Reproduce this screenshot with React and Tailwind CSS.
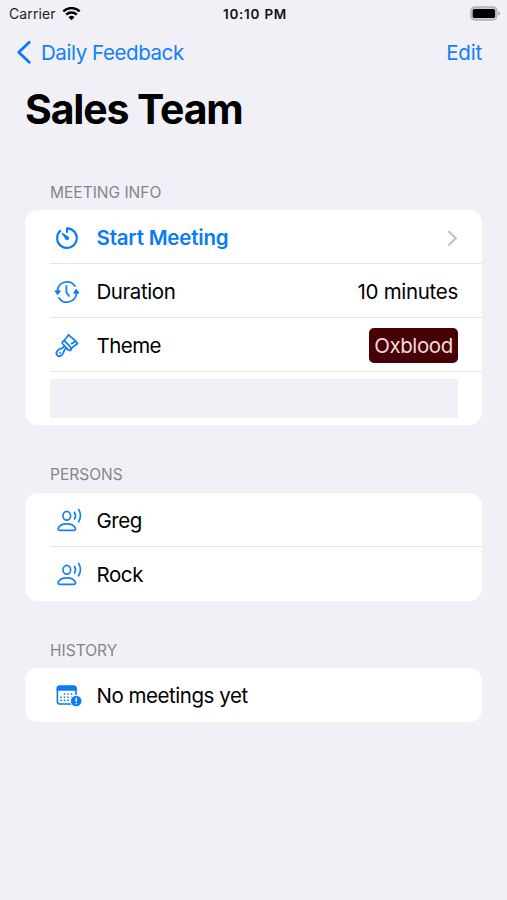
import React from "react";

function WifiIcon() {
  return (
    <svg width="19" height="14" viewBox="0 0 19 14" fill="none" stroke="#000" strokeWidth="2.4">
      <path d="M1.3 4.4a11.7 11.7 0 0 1 16.4 0" />
      <path d="M4.2 7.7a7.6 7.6 0 0 1 10.6 0" />
      <path d="M9.5 13.2 6.5 10.2a4.3 4.3 0 0 1 6 0z" fill="#000" stroke="none" />
    </svg>
  );
}

function BatteryIcon() {
  return (
    <svg width="31" height="16" viewBox="0 0 31 16">
      <rect x="0.9" y="1" width="26" height="13" rx="4" fill="#d0d0d2" stroke="#b0b0b3" strokeWidth="1.3" />
      <rect x="2.7" y="2.9" width="22.4" height="9.2" rx="1.6" fill="#000" />
      <path d="M28.2 5.2q2 .9 2 2.3t-2 2.3z" fill="#b0b0b3" />
    </svg>
  );
}

function TimerIcon() {
  return (
    <svg width="28" height="28" viewBox="0 0 28 28" fill="none" stroke="#087bf5" strokeWidth="2.2" strokeLinecap="round" strokeLinejoin="round">
      <path d="M14 8V4.3a9.8 9.8 0 1 1-6.7 2.6" />
      <path d="M9.2 9.2 15.4 13.4a1.5 1.5 0 0 1-2 2z" fill="#087bf5" strokeWidth="1.2" />
    </svg>
  );
}

function ClockArrowsIcon() {
  return (
    <svg width="28" height="28" viewBox="0 0 28 28" fill="none" stroke="#1580f5" strokeWidth="1.8" strokeLinecap="round" strokeLinejoin="round">
      <path d="M4.4 13a9.7 9.9 0 0 1 17.6-4.9" />
      <path d="M23.6 15a9.7 9.9 0 0 1-17.6 4.9" />
      <path d="M2.3 13h4.8l-2.4 3.5z" fill="#1580f5" strokeWidth="1.3" />
      <path d="M20.9 15h4.8l-2.4-3.5z" fill="#1580f5" strokeWidth="1.3" />
      <path d="M13.4 8v6.4l2.6 3.6" />
    </svg>
  );
}

function BrushIcon() {
  return (
    <svg width="28" height="28" viewBox="0 0 28 28" fill="none" stroke="#1580f5" strokeWidth="1.8" strokeLinecap="round" strokeLinejoin="round">
      <path d="M10.8 9 15.6 2.7c1.1 1.6 2.2 2.4 3.6 3.3 2 1.4 3.8 3.3 5.4 5.5l-6.9 5.3" />
      <path d="m18.6 11.6 2.9-1.7" />
      <path d="M10.5 9c-1.5.8-1.6 1.900-.7 3l5.8 6.1c1 .7 2.1.5 2.7-.7.2-.9 0-1.5-.6-2.100l-5.300-5.600c-.6-.6-1.200-.9-1.900-.7Z" />
      <path d="M11.2 13.800c.1 1.300-.3 1.800-1.400 2.100-2.300.6-4.600 1.600-5.600 3.100-1.100 1.600-.9 3.400.2 4.500 1.400 1.100 3.200.7 4.500-.6 1.200-1.400 2-3 2.500-4.900.3-1 .9-1.300 2.400-1.100" />
      <path d="M7 20.900h.1" strokeWidth="1.8" />
    </svg>
  );
}

function SpeakerIcon() {
  return (
    <svg width="29" height="28" viewBox="0 0 29 28" fill="none" stroke="#1580f5" strokeWidth="1.7" strokeLinecap="round" strokeLinejoin="round">
      <ellipse cx="13.8" cy="8.8" rx="3.8" ry="4.4" />
      <path d="M7 23.4c-1.600 0-2.200-.9-1.800-2 1-2.900 4.400-4.600 8.600-4.600s7.600 1.700 8.600 4.600c.4 1.100-.2 2-1.800 2z" />
      <path d="M21.500 5.500a6.100 6.100 0 0 1 0 6.500" />
      <path d="M25.600 2.400a12 12 0 0 1 0 12.400" />
    </svg>
  );
}

function CalendarIcon() {
  return (
    <svg width="30" height="28" viewBox="0 0 30 28" fill="#087bf5">
      <rect x="4.4" y="4.4" width="18.6" height="17.6" rx="2.6" fill="#fff" stroke="#087bf5" strokeWidth="1.6" />
      <path d="M3.6 8.8V6.400a2.800 2.800 0 0 1 2.800-2.800h14.600a2.800 2.800 0 0 1 2.800 2.800v2.400z" />
      {[12, 15.2, 18.4].map((y, row) =>
        [8, 11.5, 15, 18.5].map((x, col) =>
          (row === 0 && col === 0) || (row === 2 && col === 3) ? null : (
            <rect key={`${x}-${y}`} x={x - 0.8} y={y - 0.8} width="1.6" height="1.6" rx="0.4" />
          )
        )
      )}
      <circle cx="23.200" cy="19" r="6.2" fill="#fff" />
      <circle cx="23.200" cy="19" r="5.3" />
      <path d="M23.2 16.200v3M23.200 21.600v.1" stroke="#fff" strokeWidth="1.5" strokeLinecap="round" />
    </svg>
  );
}

function Label({ children, className = "" }) {
  return (
    <h2 className={`pl-[25px] text-[15.5px] leading-5 tracking-normal text-[#85858b] ${className}`}>{children}</h2>
  );
}

function Row({ icon, children, trailing, last }) {
  return (
    <div className={`flex items-center pl-[25px] ${last ? "h-[53.5px]" : "h-[54px]"}`}>
      <div className={`flex h-full flex-1 items-center pr-[24px] pt-[2px] ${last ? "" : "border-b border-[#e5e5e8]"}`}>
        <span className="flex w-[46.5px] shrink-0 pl-[3px]">{icon}</span>
        <span className="flex-1 whitespace-nowrap">{children}</span>
        {trailing}
      </div>
    </div>
  );
}

export default function App() {
  return (
    <div className="h-[900px] w-[507px] overflow-hidden bg-[#f1f0f6] font-['Inter',sans-serif] text-[20.5px] leading-7 tracking-[-0.42px] text-black">
      <header className="grid h-7 grid-cols-3 items-center pl-[9px] pr-[6px] text-[14px] leading-5 tracking-normal">
        <div className="flex items-center gap-[6px]">
          <span className="tracking-[0.1px] text-[#222]">Carrier</span>
          <WifiIcon />
        </div>
        <span className="text-center text-[13.5px] font-semibold tracking-[0.75px] text-[#111]">10:10 PM</span>
        <div className="flex justify-end">
          <BatteryIcon />
        </div>
      </header>

      <nav className="flex h-12 items-center justify-between pl-[16px] pr-[25px] pt-[2px] text-[#127ff8]">
        <div className="flex items-center gap-[9px]">
          <svg width="16" height="26" viewBox="0 0 16 26" fill="none" stroke="#087bf5" strokeWidth="2.8" strokeLinecap="round" strokeLinejoin="round">
            <path d="M13.3 2.2 2.7 12.2l10.600 10" />
          </svg>
          <span>Daily Feedback</span>
        </div>
        <span className="tracking-[-0.2px]">Edit</span>
      </nav>

      <h1 className="h-[107px] pl-[25px] pt-[9px] text-[41px] font-bold leading-[48px] tracking-[-1.15px]">Sales Team</h1>

      <main className="px-[25px]">
        <Label>MEETING INFO</Label>
        <section className="mt-[7px] h-[215px] rounded-[13px] bg-white">
          <Row
            icon={<TimerIcon />}
            trailing={
              <svg width="11" height="18" viewBox="0 0 11 18" fill="none" stroke="#c2c2c5" strokeWidth="2.2" strokeLinecap="round" strokeLinejoin="round">
                <path d="m2 2.7 6.9 6.5L2 15.7" />
              </svg>
            }
          >
            <span className="font-semibold tracking-[-0.2px] text-[#087bf5]">Start Meeting</span>
          </Row>
          <Row icon={<ClockArrowsIcon />} trailing={<span className="tracking-[-0.3px]">10 minutes</span>}>Duration</Row>
          <Row
            icon={<BrushIcon />}
            trailing={
              <span className="flex h-[35px] w-[89px] items-center justify-center rounded-[5px] bg-[#480007] text-[#efdcd6]">Oxblood</span>
            }
          >
            <span className="tracking-[-0.55px]">Theme</span>
          </Row>
          <div className="ml-[25px] mr-[24px] mt-[7px] h-[39px] bg-[#f1f0f6]" />
        </section>

        <Label className="mt-[40px]">PERSONS</Label>
        <section className="mt-[8px] rounded-[13px] bg-white">
          <Row icon={<SpeakerIcon />}>Greg</Row>
          <Row icon={<SpeakerIcon />} last>Rock</Row>
        </section>

        <Label className="mt-[40px]">HISTORY</Label>
        <section className="mt-[7.5px] rounded-[13px] bg-white">
          <Row icon={<CalendarIcon />} last>
            <span className="tracking-[-0.46px]">No meetings yet</span>
          </Row>
        </section>
      </main>
    </div>
  );
}
